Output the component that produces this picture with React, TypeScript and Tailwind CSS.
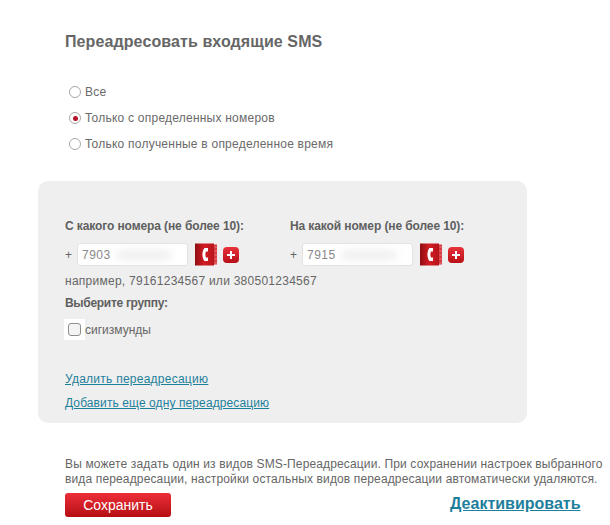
const radios = [
  { label: "Все", checked: false },
  { label: "Только с определенных номеров", checked: true },
  { label: "Только полученные в определенное время", checked: false },
];

function Radio({ checked }: { checked: boolean }) {
  return (
    <span className="flex h-3 w-3 shrink-0 items-center justify-center rounded-full border border-[#a8a8a8] bg-white">
      {checked && <span className="h-[5px] w-[5px] rounded-full bg-[#b5122b]" />}
    </span>
  );
}

function BookIcon() {
  return (
    <svg width="23" height="23" viewBox="0 0 23 23" className="shrink-0">
      <defs>
        <linearGradient id="book" x1="0" y1="0" x2="1" y2="0">
          <stop offset="0" stopColor="#8f0d12" />
          <stop offset="0.5" stopColor="#d41c24" />
          <stop offset="1" stopColor="#b5151b" />
        </linearGradient>
      </defs>
      <rect x="0" y="0.5" width="19" height="22" fill="url(#book)" />
      <rect x="19" y="1.5" width="3" height="20" fill="#d83a40" />
      <path d="M19.5 4h3M19.5 8h3M19.5 12h3M19.5 16h3M19.5 20h3" stroke="#eba0a2" strokeWidth="0.7" />
      <path
        d="M13 5 L9.5 5 C7 7.5 6.5 14.5 9.5 18 L13 18 L13 14.5 L11 14.5 C10.2 13 10.2 10 11 8.5 L13 8.5 Z"
        fill="#fff"
      />
    </svg>
  );
}

function PlusIcon() {
  return (
    <span className="relative flex h-4 w-4 shrink-0 items-center justify-center rounded-[4px] bg-gradient-to-b from-[#e8323a] to-[#b80d16]">
      <span className="absolute h-[2px] w-2 bg-white" />
      <span className="absolute h-2 w-[2px] bg-white" />
    </span>
  );
}

function NumberField({ label, prefix }: { label: string; prefix: string }) {
  return (
    <div className="w-[225px]">
      <p className="text-xs leading-[14px] font-bold tracking-[-0.1px] text-[#5f5f5f]">{label}</p>
      <div className="mt-[10px] flex items-center">
        <span className="w-3 text-xs text-[#666]">+</span>
        <div className="relative flex h-[23px] w-[111px] items-center overflow-hidden rounded-[3px] border border-[#e2e2e2] bg-white pl-[4px] text-xs tracking-[0.5px] text-[#888]">
          {prefix}
          <span className="absolute top-[7px] left-[38px] h-[8px] w-[56px] rounded-full bg-[#ececec] blur-[4px]" />
        </div>
        <span className="ml-[7px]">
          <BookIcon />
        </span>
        <span className="ml-[5px]">
          <PlusIcon />
        </span>
      </div>
    </div>
  );
}

export default function App() {
  return (
    <div className="h-[525px] w-[610px] overflow-hidden bg-white pt-[33px] pl-[65px] font-['Liberation_Sans',Arial,sans-serif]">
      <h1 className="text-base leading-[17px] font-bold tracking-[0.1px] text-[#666]">
        Переадресовать входящие SMS
      </h1>

      <div className="mt-[35px] ml-[4px] flex flex-col gap-[12px]">
        {radios.map((r) => (
          <label
            key={r.label}
            className="flex h-[14px] items-center gap-[4px] text-xs tracking-[0.23px] text-[#6a6a6a]"
          >
            <Radio checked={r.checked} />
            {r.label}
          </label>
        ))}
      </div>

      <div className="mt-[30px] -ml-[27px] h-[242px] w-[489px] rounded-[10px] bg-[#efefef] pt-[38px] pl-[27px]">
        <div className="flex">
          <NumberField label="С какого номера (не более 10):" prefix="7903" />
          <NumberField label="На какой номер (не более 10):" prefix="7915" />
        </div>
        <p className="mt-[8px] text-xs leading-[14px] tracking-[0.26px] text-[#666]">
          например, 79161234567 или 380501234567
        </p>
        <p className="mt-[8px] text-xs leading-[14px] font-bold tracking-[-0.3px] text-[#5f5f5f]">
          Выберите группу:
        </p>
        <div className="mt-[9px] -ml-px flex items-center">
          <span className="flex h-[21px] w-[21px] items-center justify-center bg-white">
            <span className="h-[13px] w-[13px] rounded-[3px] border border-[#8f8f8f] bg-[#f4f4f4]" />
          </span>
          <span className="text-xs text-[#666]">сигизмунды</span>
        </div>
        <div className="mt-[32px] flex flex-col gap-[10px] text-xs leading-[14px] text-[#1e7f9c] underline">
          <a href="#" className="tracking-[0.25px]">Удалить переадресацию</a>
          <a href="#" className="tracking-[0.1px]">Добавить еще одну переадресацию</a>
        </div>
      </div>

      <p className="mt-[34px] w-[545px] text-xs leading-[15px] tracking-[0.14px] whitespace-nowrap text-[#666]">
        Вы можете задать один из видов SMS-Переадресации. При сохранении настроек выбранного
        <br />
        вида переадресации, настройки остальных видов переадресации автоматически удаляются.
      </p>

      <div className="mt-[5px] flex items-center">
        <button className="h-6 w-[106px] rounded-[3px] bg-gradient-to-b from-[#ee2d38] to-[#b50d13] text-sm text-white">
          Сохранить
        </button>
        <a href="#" className="mb-[2px] ml-[279px] text-base font-bold whitespace-nowrap text-[#1e7f9c] underline">
          Деактивировать
        </a>
      </div>
    </div>
  );
}
